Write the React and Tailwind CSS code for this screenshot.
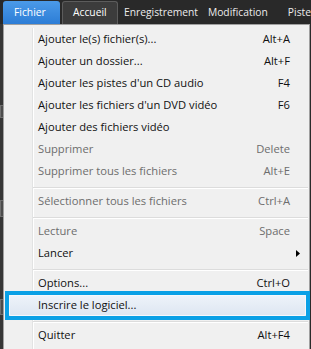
import React from "react";

const items = [
  { t: "Ajouter le(s) fichier(s)...", k: "Alt+A" },
  { t: "Ajouter un dossier...", k: "Alt+F" },
  { t: "Ajouter les pistes d'un CD audio", k: "F4" },
  { t: "Ajouter les fichiers d'un DVD vidéo", k: "F6" },
  { t: "Ajouter des fichiers vidéo", k: "" },
  { t: "Supprimer", k: "Delete", d: true },
  { t: "Supprimer tous les fichiers", k: "Alt+E", d: true },
  { sep: true },
  { t: "Sélectionner tous les fichiers", k: "Ctrl+A", d: true },
  { sep: true },
  { t: "Lecture", k: "Space", d: true },
  { t: "Lancer", k: "", sub: true },
  { sep: true },
  { t: "Options...", k: "Ctrl+O" },
  { t: "Inscrire le logiciel...", k: "", hl: true },
  { sep: true },
  { t: "Quitter", k: "Alt+F4" },
];

function Separator() {
  return (
    <div className="-ml-px mr-px flex h-[8px] flex-col pt-[5px]">
      <div className="h-px bg-[#dcdcdc]" />
      <div className="h-px bg-white" />
    </div>
  );
}

function Item({ it }) {
  const color = it.d ? "text-[#6d6d6d]" : "text-[#111]";
  return (
    <div className={`relative flex h-[22px] items-center ${color}`}>
      {it.hl && (
        <div className="absolute -bottom-[4px] -left-[29px] -right-px -top-[3px] border-4 border-[#0aa0e6] bg-gradient-to-b from-[#eef3fa] to-[#dde6f1]">
          <div className="h-full w-full rounded-[2px] border border-[#f5f8fc]" />
        </div>
      )}
      <span className="relative flex-1 pl-[4px] whitespace-nowrap">{it.t}</span>
      <span className="relative whitespace-nowrap text-right">{it.k}</span>
      <span className="relative flex w-[19px] items-center pl-[6px]">
        {it.sub && (
          <svg width="4" height="7" viewBox="0 0 4 7">
            <path d="M0 0 L4 3.5 L0 7 Z" fill="#000" />
          </svg>
        )}
      </span>
    </div>
  );
}

export default function App() {
  return (
    <div className="flex h-[349px] w-[311px] flex-col overflow-hidden bg-[#2a2a2a] font-['Open_Sans',sans-serif]">
      {/* top tab bar */}
      <div className="flex h-[24px] shrink-0 items-end bg-[#292929] text-[10.3px] text-[#ececec]">
        <div className="ml-[3px] flex h-[23px] w-[57px] items-center rounded-t-[3px] bg-gradient-to-b from-[#4b9ae8] to-[#2c7dd6] pl-[11px] text-white">
          Fichier
        </div>
        <div className="ml-[2px] flex h-[23px] w-[56px] items-center rounded-t-[3px] border border-b-0 border-[#5c5c5c] bg-[#3c3c3c] pl-[10px] text-white">
          Accueil
        </div>
        <div className="ml-[6px] flex h-[23px] w-[84px] items-center">Enregistrement</div>
        <div className="flex h-[23px] w-[80px] items-center">Modification</div>
        <div className="flex h-[23px] items-center whitespace-nowrap">Piste</div>
      </div>

      {/* body */}
      <div className="flex flex-1">
        {/* strip of the app underneath */}
        <div className="flex w-[3px] flex-col bg-[#363636]">
          <div className="mt-[81px] h-[13px] border border-r-0 border-[#6e6e6e] bg-[#4c4c4c]" />
          <div className="mt-[82px] h-[17px] border border-r-0 border-[#6e6e6e] bg-[#4c4c4c]" />
          <div className="mt-[82px] h-[16px] border border-r-0 border-[#6e6e6e] bg-[#4c4c4c]" />
        </div>

        {/* menu */}
        <div className="flex w-[307px] flex-col border-x border-t border-[#a0a0a0] bg-[#f0f0f0] pt-[3px] text-[11.2px]">
          <div className="flex flex-1">
            <div className="w-[29px] border-r border-[#e2e3e3]" />
            <div className="flex flex-1 flex-col border-l border-white">
              {items.map((it, i) =>
                it.sep ? <Separator key={i} /> : <Item key={i} it={it} />
              )}
            </div>
          </div>
        </div>
        <div className="w-px bg-[#2a2a2a]" />
      </div>
    </div>
  );
}
